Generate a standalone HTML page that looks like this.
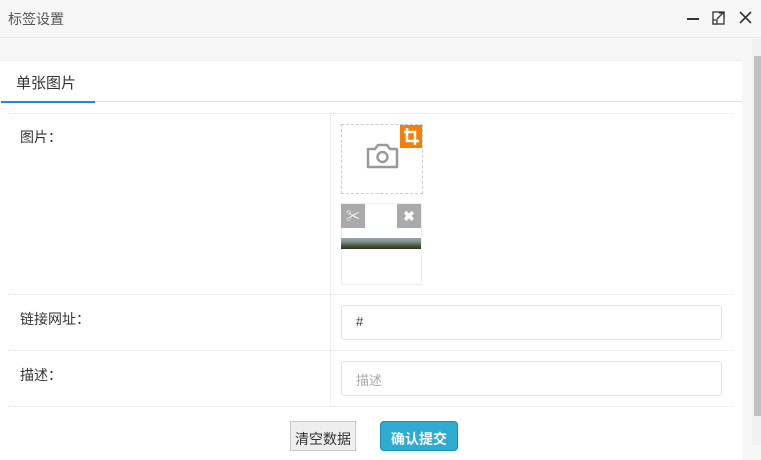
<!DOCTYPE html>
<html><head><meta charset="utf-8"><style>
*{margin:0;padding:0;box-sizing:border-box}
body{width:761px;height:445px;overflow:hidden;background:#f7f7f7;font-family:"Liberation Sans","Noto Sans CJK SC",sans-serif;font-size:14px;color:#333;position:relative}
.a{position:absolute;white-space:nowrap}
.hd{left:0;top:0;width:761px;height:38px;background:#f7f7f7;border-bottom:1px solid #e8e8e8}
.panel{left:0;top:60px;width:742px;height:400px;background:#fff;border-top:1px solid #eee}
.dl{border-top:1px dotted #e2e2e2}
.inp{border:1px solid #e2e2e2;border-radius:3px;background:#fff;height:35px;width:381px;left:341px;padding:8px 14px;font-size:13px}
</style></head><body>
<div class="a hd"></div>
<div class="a" style="left:8px;top:9px;font-size:14px;color:#555">标签设置</div>
<div class="a" style="left:687px;top:18px;width:12px;height:2px;background:#333"></div>
<svg class="a" style="left:712px;top:10px" width="14" height="16" viewBox="0 0 14 16"><rect x="1" y="2" width="11" height="12" fill="none" stroke="#333" stroke-width="1.3"/><path d="M5 9L11 3M7 3h5v5" stroke="#333" fill="none" stroke-width="1.3"/><rect x="1" y="10" width="4" height="4" fill="#fff" stroke="#333" stroke-width="1.2"/></svg>
<svg class="a" style="left:739px;top:11px" width="13" height="13"><path d="M1 1L12 12M12 1L1 12" stroke="#333" stroke-width="1.6"/></svg>
<div class="a" style="left:752px;top:39px;width:9px;height:406px;background:#f1f1f1"></div>
<div class="a" style="left:754px;top:56px;width:7px;height:360px;background:#c1c1c1"></div>
<div class="a panel"></div>
<div class="a" style="left:16px;top:72px;font-size:15px;color:#333">单张图片</div>
<div class="a" style="left:0;top:101px;width:742px;height:1px;background:#dcdcec"></div>
<div class="a" style="left:1px;top:101px;width:94px;height:2px;background:#1e88e5"></div>
<div class="a dl" style="left:8px;top:113px;width:726px"></div>
<div class="a dl" style="left:8px;top:294px;width:726px"></div>
<div class="a dl" style="left:8px;top:350px;width:726px"></div>
<div class="a dl" style="left:8px;top:406px;width:726px"></div>
<div class="a" style="left:330px;top:113px;height:293px;border-left:1px dotted #e2e2e2"></div>
<div class="a" style="left:20px;top:127px;font-size:14px">图片：</div>
<div class="a" style="left:20px;top:309px;font-size:14px">链接网址：</div>
<div class="a" style="left:20px;top:365px;font-size:14px">描述：</div>
<div class="a" style="left:341px;top:124px;width:82px;height:70px;border:1px dashed #ccc"></div>
<svg class="a" style="left:365px;top:142px" width="35" height="28" viewBox="0 0 35 28"><path d="M3 7h7l3-4h9l3 4h7v18H3z" fill="none" stroke="#999" stroke-width="2.5" stroke-linejoin="round"/><circle cx="17.5" cy="15" r="5" fill="none" stroke="#999" stroke-width="2.5"/></svg>
<div class="a" style="left:400px;top:125px;width:22px;height:23px;background:#f47f06"></div>
<svg class="a" style="left:400px;top:125px" width="22" height="23"><path d="M7 3v13h12M4 7h11v13" stroke="#fff" stroke-width="2.5" fill="none"/></svg>
<div class="a" style="left:341px;top:203px;width:81px;height:82px;border:1px solid #eee;background:#fff"></div>
<div class="a" style="left:341px;top:204px;width:24px;height:24px;background:#aaa;color:#fff;font-size:14px;text-align:center;line-height:24px">✂</div>
<div class="a" style="left:397px;top:204px;width:24px;height:24px;background:#aaa;color:#fff;font-size:14px;text-align:center;line-height:24px;font-weight:bold">✖</div>
<div class="a" style="left:341px;top:238px;width:80px;height:11px;background:linear-gradient(#9aa6b2 0,#7f8f86 35%,#4f6040 65%,#2b3322 100%)"></div>
<div class="a inp" style="top:305px;color:#333">#</div>
<div class="a inp" style="top:361px;color:#aaa">描述</div>
<div class="a" style="left:290px;top:421px;width:66px;height:30px;border:1px solid #c8c8c8;background:#eee;font-size:14px;padding:7px 0;text-align:center;color:#333">清空数据</div>
<div class="a" style="left:380px;top:421px;width:78px;height:30px;border:1px solid #1a8fb3;border-radius:4px;background:#2eabd0;font-size:14px;padding:7px 0;text-align:center;color:#fff;font-weight:bold">确认提交</div>
</body></html>
